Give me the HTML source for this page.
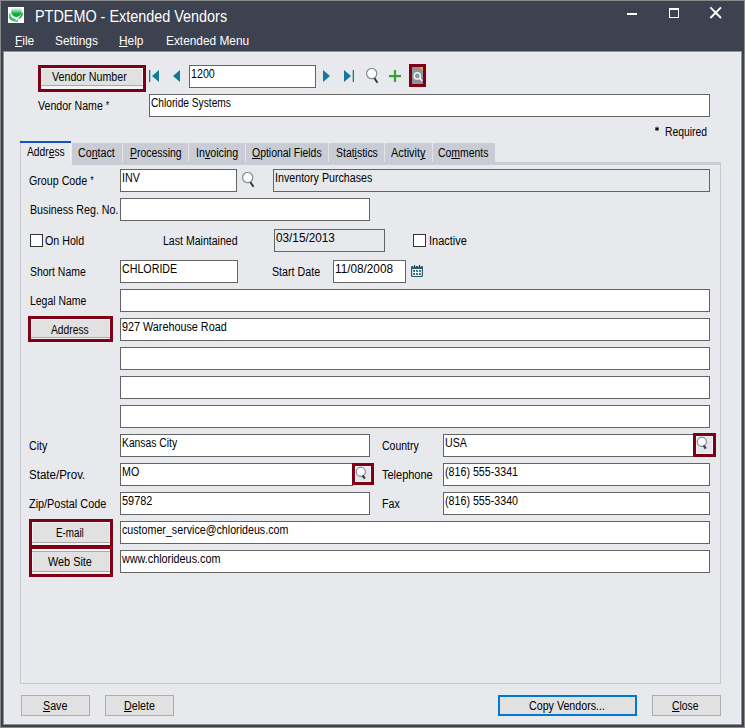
<!DOCTYPE html><html><head><meta charset="utf-8"><title>PTDEMO - Extended Vendors</title><style>
*{margin:0;padding:0}
html,body{width:745px;height:728px;overflow:hidden;background:#8a8a8a}
.t{position:absolute;white-space:pre;font-family:"Liberation Sans",sans-serif;transform-origin:0 0}
.b{position:absolute}

.ast{font-size:10px;position:relative;top:-1px}
u{text-decoration:underline;text-decoration-thickness:1px;text-underline-offset:1px}
svg{position:absolute}
</style></head><body>
<div class="b" style="left:1px;top:1px;width:743px;height:726px;background:#3c4250"></div>
<div class="b" style="left:3px;top:51px;width:739px;height:674px;box-sizing:border-box;background:#e8e9ec;border:1px solid #8c8e94"></div>
<div class="b" style="left:4px;top:52px;width:737px;height:672px;box-sizing:border-box;border:1px solid #eff0f3"></div>
<div class="b" style="left:8px;top:7px;width:16px;height:16px;background:#fff"></div>
<svg style="left:8px;top:7px" width="16" height="16" viewBox="0 0 16 16"><defs><linearGradient id="g" x1="0" y1="0" x2="0" y2="1"><stop offset="0" stop-color="#f0faf2"/><stop offset="0.25" stop-color="#9edcb0"/><stop offset="0.6" stop-color="#16b04a"/><stop offset="1" stop-color="#0a9c3c"/></linearGradient></defs><path d="M3.2 2.6 Q3.2 1 5 1 L11.8 1 Q13.6 1 13.6 2.6 L13.6 5 Q13.2 9.2 8.3 10 Q3.4 9.2 3.2 5 Z" fill="url(#g)"/><path d="M15 5.2 Q15.5 11 8.5 12.8 Q12.6 10 13.4 6.2 Z" fill="#12a844"/><path d="M1.6 6.2 Q1.4 11.6 7.5 12.6" stroke="#22b050" stroke-width="1.1" fill="none"/><path d="M1.2 9.6 Q3 14.6 10 14" stroke="#22b050" stroke-width="1.3" fill="none"/></svg>
<div class="t" style="left:35px;top:9px;font-size:16px;line-height:16px;color:#fff;transform:scaleX(0.9);">PTDEMO - Extended Vendors</div>
<div class="b" style="left:627px;top:13px;width:10px;height:2px;background:#fff"></div>
<div class="b" style="left:669px;top:8px;width:10px;height:10px;box-sizing:border-box;border:1px solid #fff;border-top-width:2px"></div>
<svg style="left:709px;top:6px" width="14" height="14" viewBox="0 0 14 14"><path d="M1.4 1.4 L12 12 M12 1.4 L1.4 12" stroke="#fff" stroke-width="1.9"/></svg>
<div class="t" style="left:15px;top:35px;font-size:12.5px;line-height:12.5px;color:#fff;transform:scaleX(0.95);"><u>F</u>ile</div>
<div class="t" style="left:55px;top:35px;font-size:12.5px;line-height:12.5px;color:#fff;transform:scaleX(0.95);">Settings</div>
<div class="t" style="left:119px;top:35px;font-size:12.5px;line-height:12.5px;color:#fff;transform:scaleX(0.95);"><u>H</u>elp</div>
<div class="t" style="left:166px;top:35px;font-size:12.5px;line-height:12.5px;color:#fff;transform:scaleX(0.95);">Extended Menu</div>
<div class="b" style="left:41px;top:68px;width:102px;height:21px;background:#f3f4f6"></div>
<div class="b" style="left:42px;top:69px;width:100px;height:16px;background:#e1e1e1"></div>
<div class="b" style="left:41px;top:85px;width:102px;height:1px;background:#a9a9a9"></div>
<div class="b" style="left:38px;top:65px;width:108px;height:27px;box-sizing:border-box;border:3px solid #7f0015"></div>
<div class="t" style="left:52px;top:71px;font-size:12px;line-height:12px;color:#000;transform:scaleX(0.89);">Vendor Number</div>
<svg style="left:148px;top:69px" width="12" height="14" viewBox="0 0 12 14"><rect x="1" y="1" width="1.3" height="12" fill="#137a9a"/><path d="M11 1 L4 7 L11 13 Z" fill="#137a9a"/></svg>
<svg style="left:172px;top:69px" width="10" height="14" viewBox="0 0 10 14"><path d="M8 1 L1 7 L8 13 Z" fill="#137a9a"/></svg>
<div class="b" style="left:189px;top:65px;width:127px;height:23px;box-sizing:border-box;border:1px solid #646464;background:#fff"></div>
<div class="t" style="left:191px;top:68px;font-size:12px;line-height:12px;color:#000;transform:scaleX(0.89);">1200</div>
<svg style="left:322px;top:69px" width="10" height="14" viewBox="0 0 10 14"><path d="M1 1 L8 7 L1 13 Z" fill="#137a9a"/></svg>
<svg style="left:343px;top:69px" width="12" height="14" viewBox="0 0 12 14"><path d="M1 1 L8 7 L1 13 Z" fill="#137a9a"/><rect x="9.7" y="1" width="1.3" height="12" fill="#137a9a"/></svg>
<svg style="left:365px;top:68px" width="16" height="17" viewBox="0 0 16 17"><circle cx="6.7" cy="5.6" r="5.1" fill="#fff" stroke="#868b95" stroke-width="1.2"/><path d="M9.4 10.3 L12.5 14.8" stroke="#2e3440" stroke-width="2"/></svg>
<svg style="left:388px;top:69px" width="14" height="14" viewBox="0 0 14 14"><rect x="1" y="6" width="12" height="2.2" fill="#32a332"/><rect x="5.9" y="1" width="2.2" height="12" fill="#32a332"/></svg>
<div class="b" style="left:409px;top:64px;width:17px;height:23px;background:#f4f6f8"></div>
<div class="b" style="left:409px;top:64px;width:17px;height:23px;box-sizing:border-box;border:3px solid #7f0015"></div>
<svg style="left:412px;top:67px" width="11" height="17" viewBox="0 0 11 17"><rect x="0" y="0" width="11" height="17" fill="#8d929b"/><path d="M7.2 0 L11 0 L11 3.8 Z" fill="#f5b000"/><circle cx="5.3" cy="8.9" r="3.1" fill="#8d929b" stroke="#f4f4f4" stroke-width="1.5"/><path d="M7.6 11.2 L10.2 14" stroke="#f4f4f4" stroke-width="1.6"/></svg>
<div class="t" style="left:38px;top:100px;font-size:12px;line-height:12px;color:#000;transform:scaleX(0.883);">Vendor Name <span class="ast">*</span></div>
<div class="b" style="left:149px;top:94px;width:561px;height:23px;box-sizing:border-box;border:1px solid #646464;background:#fff"></div>
<div class="t" style="left:151px;top:97px;font-size:12px;line-height:12px;color:#000;transform:scaleX(0.85);">Chloride Systems</div>
<svg style="left:654px;top:126px" width="6" height="6" viewBox="0 0 6 6"><path d="M3 0.6 L3 5 M1 1.8 L5 4 M5 1.8 L1 4" stroke="#000" stroke-width="1"/></svg>
<div class="t" style="left:665px;top:126px;font-size:12px;line-height:12px;color:#000;transform:scaleX(0.865);">Required</div>
<div class="b" style="left:20px;top:162px;width:701px;height:522px;box-sizing:border-box;border:1px solid #c5c8d2;border-top:3px solid #c9ccd5"></div>
<div class="b" style="left:72px;top:143px;width:423px;height:22px;background:#c9ccd5"></div>
<div class="b" style="left:122px;top:143px;width:1px;height:19px;background:#e2e4e8"></div>
<div class="b" style="left:188px;top:143px;width:1px;height:19px;background:#e2e4e8"></div>
<div class="b" style="left:245px;top:143px;width:1px;height:19px;background:#e2e4e8"></div>
<div class="b" style="left:328px;top:143px;width:1px;height:19px;background:#e2e4e8"></div>
<div class="b" style="left:384px;top:143px;width:1px;height:19px;background:#e2e4e8"></div>
<div class="b" style="left:432px;top:143px;width:1px;height:19px;background:#e2e4e8"></div>
<div class="b" style="left:20px;top:140px;width:52px;height:25px;background:#e8e9ec;border-left:1px solid #c5c8d2;box-sizing:border-box"></div>
<div class="b" style="left:20px;top:141px;width:51px;height:2px;background:#1450c8"></div>
<div class="b" style="left:70px;top:143px;width:1px;height:19px;background:#f4f5f7"></div>
<div class="t" style="left:27px;top:146px;font-size:12px;line-height:12px;color:#000;transform:scaleX(0.855);">Addr<u>e</u>ss</div>
<div class="t" style="left:78px;top:147px;font-size:12px;line-height:12px;color:#000;transform:scaleX(0.89);">Co<u>n</u>tact</div>
<div class="t" style="left:130px;top:147px;font-size:12px;line-height:12px;color:#000;transform:scaleX(0.87);"><u>P</u>rocessing</div>
<div class="t" style="left:196px;top:147px;font-size:12px;line-height:12px;color:#000;transform:scaleX(0.89);">In<u>v</u>oicing</div>
<div class="t" style="left:252px;top:147px;font-size:12px;line-height:12px;color:#000;transform:scaleX(0.87);"><u>O</u>ptional Fields</div>
<div class="t" style="left:336px;top:147px;font-size:12px;line-height:12px;color:#000;transform:scaleX(0.871);">Stat<u>i</u>stics</div>
<div class="t" style="left:391px;top:147px;font-size:12px;line-height:12px;color:#000;transform:scaleX(0.905);">Activit<u>y</u></div>
<div class="t" style="left:438px;top:147px;font-size:12px;line-height:12px;color:#000;transform:scaleX(0.87);">Co<u>m</u>ments</div>
<div class="t" style="left:29px;top:175px;font-size:12px;line-height:12px;color:#000;transform:scaleX(0.89);">Group Code <span class="ast">*</span></div>
<div class="b" style="left:120px;top:169px;width:117px;height:23px;box-sizing:border-box;border:1px solid #646464;background:#fff"></div>
<div class="t" style="left:122px;top:172px;font-size:12px;line-height:12px;color:#000;transform:scaleX(0.89);">INV</div>
<svg style="left:241px;top:172px" width="16" height="17" viewBox="0 0 16 17"><circle cx="6.7" cy="5.6" r="5.1" fill="#fff" stroke="#868b95" stroke-width="1.2"/><path d="M9.4 10.3 L12.5 14.8" stroke="#2e3440" stroke-width="2"/></svg>
<div class="b" style="left:273px;top:169px;width:437px;height:23px;box-sizing:border-box;border:1px solid #646464;background:#e8e9ec"></div>
<div class="t" style="left:275px;top:172px;font-size:12px;line-height:12px;color:#000;transform:scaleX(0.89);">Inventory Purchases</div>
<div class="t" style="left:30px;top:204px;font-size:12px;line-height:12px;color:#000;transform:scaleX(0.89);">Business Reg. No.</div>
<div class="b" style="left:120px;top:198px;width:250px;height:23px;box-sizing:border-box;border:1px solid #646464;background:#fff"></div>
<div class="b" style="left:30px;top:234px;width:13px;height:13px;box-sizing:border-box;border:1px solid #333;background:#fff"></div>
<div class="t" style="left:45px;top:235px;font-size:12px;line-height:12px;color:#000;transform:scaleX(0.89);">On Hold</div>
<div class="t" style="left:163px;top:235px;font-size:12px;line-height:12px;color:#000;transform:scaleX(0.88);">Last Maintained</div>
<div class="b" style="left:274px;top:229px;width:111px;height:23px;box-sizing:border-box;border:1px solid #646464;background:#e8e9ec"></div>
<div class="t" style="left:276px;top:232px;font-size:12px;line-height:12px;color:#000;transform:scaleX(0.981);">03/15/2013</div>
<div class="b" style="left:413px;top:234px;width:13px;height:13px;box-sizing:border-box;border:1px solid #333;background:#fff"></div>
<div class="t" style="left:429px;top:235px;font-size:12px;line-height:12px;color:#000;transform:scaleX(0.915);">Inactive</div>
<div class="t" style="left:30px;top:266px;font-size:12px;line-height:12px;color:#000;transform:scaleX(0.87);">Short Name</div>
<div class="b" style="left:120px;top:260px;width:118px;height:23px;box-sizing:border-box;border:1px solid #646464;background:#fff"></div>
<div class="t" style="left:122px;top:263px;font-size:12px;line-height:12px;color:#000;transform:scaleX(0.89);">CHLORIDE</div>
<div class="t" style="left:272px;top:266px;font-size:12px;line-height:12px;color:#000;transform:scaleX(0.89);">Start Date</div>
<div class="b" style="left:333px;top:260px;width:73px;height:23px;box-sizing:border-box;border:1px solid #646464;background:#fff"></div>
<div class="t" style="left:335px;top:263px;font-size:12px;line-height:12px;color:#000;transform:scaleX(0.98);">11/08/2008</div>
<svg style="left:411px;top:264px" width="13" height="14" viewBox="0 0 13 14"><rect x="0" y="2" width="12" height="11" rx="1.3" fill="#1f5d6d"/><rect x="2.3" y="1.6" width="2.4" height="1.5" fill="#e8e9ec"/><rect x="7.3" y="1.6" width="2.4" height="1.5" fill="#e8e9ec"/><rect x="3" y="1" width="1" height="2.2" fill="#1c2a3e"/><rect x="8" y="1" width="1" height="2.2" fill="#1c2a3e"/><rect x="1.2" y="5" width="9.6" height="6.9" fill="#fff"/><g fill="#1f5d6d"><rect x="2.1" y="6" width="1.9" height="1.8"/><rect x="5.1" y="6" width="1.9" height="1.8"/><rect x="8" y="6" width="1.9" height="1.8"/><rect x="2.1" y="9.1" width="1.9" height="1.8"/><rect x="5.1" y="9.1" width="1.9" height="1.8"/><rect x="8" y="9.1" width="1.9" height="1.8"/></g></svg>
<div class="t" style="left:30px;top:295px;font-size:12px;line-height:12px;color:#000;transform:scaleX(0.87);">Legal Name</div>
<div class="b" style="left:120px;top:289px;width:590px;height:23px;box-sizing:border-box;border:1px solid #646464;background:#fff"></div>
<div class="b" style="left:31px;top:319px;width:79px;height:20px;background:#f3f4f6"></div>
<div class="b" style="left:32px;top:320px;width:77px;height:17px;background:#e1e1e1"></div>
<div class="b" style="left:31px;top:337px;width:79px;height:1px;background:#a9a9a9"></div>
<div class="b" style="left:28px;top:316px;width:85px;height:26px;box-sizing:border-box;border:3px solid #7f0015"></div>
<div class="t" style="left:51px;top:324px;font-size:12px;line-height:12px;color:#000;transform:scaleX(0.855);">Address</div>
<div class="b" style="left:120px;top:318px;width:590px;height:23px;box-sizing:border-box;border:1px solid #646464;background:#fff"></div>
<div class="t" style="left:122px;top:321px;font-size:12px;line-height:12px;color:#000;transform:scaleX(0.9);">927 Warehouse Road</div>
<div class="b" style="left:120px;top:347px;width:590px;height:23px;box-sizing:border-box;border:1px solid #646464;background:#fff"></div>
<div class="b" style="left:120px;top:376px;width:590px;height:23px;box-sizing:border-box;border:1px solid #646464;background:#fff"></div>
<div class="b" style="left:120px;top:405px;width:590px;height:23px;box-sizing:border-box;border:1px solid #646464;background:#fff"></div>
<div class="t" style="left:29px;top:440px;font-size:12px;line-height:12px;color:#000;transform:scaleX(0.89);">City</div>
<div class="b" style="left:120px;top:434px;width:250px;height:23px;box-sizing:border-box;border:1px solid #646464;background:#fff"></div>
<div class="t" style="left:122px;top:437px;font-size:12px;line-height:12px;color:#000;transform:scaleX(0.86);">Kansas City</div>
<div class="t" style="left:382px;top:440px;font-size:12px;line-height:12px;color:#000;transform:scaleX(0.873);">Country</div>
<div class="b" style="left:443px;top:434px;width:251px;height:23px;box-sizing:border-box;border:1px solid #646464;background:#fff"></div>
<div class="t" style="left:445px;top:437px;font-size:12px;line-height:12px;color:#000;transform:scaleX(0.89);">USA</div>
<div class="b" style="left:693px;top:433px;width:23px;height:24px;background:#e4e6ea"></div>
<div class="b" style="left:696px;top:436px;width:17px;height:18px;box-sizing:border-box;border:1px solid #f2f6fa"></div>
<div class="b" style="left:693px;top:433px;width:23px;height:24px;box-sizing:border-box;border:3px solid #7f0015"></div>
<svg style="left:696px;top:436px" width="16" height="16" viewBox="0 0 16 16"><circle cx="5.8" cy="5.8" r="4.6" fill="#fff" stroke="#6e747e" stroke-width="1"/><path d="M7.6 9.3 L9.8 12.6" stroke="#3a3f48" stroke-width="2.2"/></svg>
<div class="t" style="left:29px;top:469px;font-size:12px;line-height:12px;color:#000;transform:scaleX(0.962);">State/Prov.</div>
<div class="b" style="left:120px;top:463px;width:233px;height:23px;box-sizing:border-box;border:1px solid #646464;background:#fff"></div>
<div class="t" style="left:122px;top:466px;font-size:12px;line-height:12px;color:#000;transform:scaleX(0.89);">MO</div>
<div class="b" style="left:352px;top:463px;width:22px;height:22px;background:#e4e6ea"></div>
<div class="b" style="left:355px;top:466px;width:16px;height:16px;box-sizing:border-box;border:1px solid #f2f6fa"></div>
<div class="b" style="left:352px;top:463px;width:22px;height:22px;box-sizing:border-box;border:3px solid #7f0015"></div>
<svg style="left:355px;top:466px" width="16" height="16" viewBox="0 0 16 16"><circle cx="5.8" cy="5.8" r="4.6" fill="#fff" stroke="#6e747e" stroke-width="1"/><path d="M7.6 9.3 L9.8 12.6" stroke="#3a3f48" stroke-width="2.2"/></svg>
<div class="t" style="left:382px;top:469px;font-size:12px;line-height:12px;color:#000;transform:scaleX(0.915);">Telephone</div>
<div class="b" style="left:443px;top:463px;width:267px;height:23px;box-sizing:border-box;border:1px solid #646464;background:#fff"></div>
<div class="t" style="left:445px;top:466px;font-size:12px;line-height:12px;color:#000;transform:scaleX(0.89);">(816) 555-3341</div>
<div class="t" style="left:29px;top:498px;font-size:12px;line-height:12px;color:#000;transform:scaleX(0.905);">Zip/Postal Code</div>
<div class="b" style="left:120px;top:492px;width:250px;height:23px;box-sizing:border-box;border:1px solid #646464;background:#fff"></div>
<div class="t" style="left:122px;top:495px;font-size:12px;line-height:12px;color:#000;transform:scaleX(0.91);">59782</div>
<div class="t" style="left:382px;top:498px;font-size:12px;line-height:12px;color:#000;transform:scaleX(0.89);">Fax</div>
<div class="b" style="left:443px;top:492px;width:267px;height:23px;box-sizing:border-box;border:1px solid #646464;background:#fff"></div>
<div class="t" style="left:445px;top:495px;font-size:12px;line-height:12px;color:#000;transform:scaleX(0.89);">(816) 555-3340</div>
<div class="b" style="left:32px;top:522px;width:78px;height:52px;background:#f3f4f6"></div>
<div class="b" style="left:33px;top:523px;width:76px;height:19px;background:#e1e1e1"></div>
<div class="b" style="left:32px;top:542px;width:78px;height:1px;background:#a9a9a9"></div>
<div class="b" style="left:32px;top:551px;width:78px;height:1px;background:#a9a9a9"></div>
<div class="b" style="left:33px;top:552px;width:76px;height:19px;background:#e1e1e1"></div>
<div class="b" style="left:32px;top:571px;width:78px;height:1px;background:#a9a9a9"></div>
<div class="b" style="left:29px;top:519px;width:84px;height:30px;box-sizing:border-box;border:3px solid #7f0015"></div>
<div class="b" style="left:29px;top:545px;width:84px;height:32px;box-sizing:border-box;border:3px solid #7f0015"></div>
<div class="t" style="left:56px;top:527px;font-size:12px;line-height:12px;color:#000;transform:scaleX(0.817);">E-mail</div>
<div class="t" style="left:48px;top:556px;font-size:12px;line-height:12px;color:#000;transform:scaleX(0.905);">Web Site</div>
<div class="b" style="left:120px;top:521px;width:590px;height:23px;box-sizing:border-box;border:1px solid #646464;background:#fff"></div>
<div class="t" style="left:122px;top:524px;font-size:12px;line-height:12px;color:#000;transform:scaleX(0.89);">customer_service@chlorideus.com</div>
<div class="b" style="left:120px;top:550px;width:590px;height:23px;box-sizing:border-box;border:1px solid #646464;background:#fff"></div>
<div class="t" style="left:122px;top:553px;font-size:12px;line-height:12px;color:#000;transform:scaleX(0.9);">www.chlorideus.com</div>
<div class="b" style="left:21px;top:695px;width:69px;height:21px;box-sizing:border-box;border:1px solid #adadad;background:#e1e1e1"></div>
<div class="t" style="left:43px;top:700px;font-size:12px;line-height:12px;color:#000;transform:scaleX(0.89);"><u>S</u>ave</div>
<div class="b" style="left:105px;top:695px;width:69px;height:21px;box-sizing:border-box;border:1px solid #adadad;background:#e1e1e1"></div>
<div class="t" style="left:124px;top:700px;font-size:12px;line-height:12px;color:#000;transform:scaleX(0.89);"><u>D</u>elete</div>
<div class="b" style="left:498px;top:695px;width:139px;height:21px;box-sizing:border-box;border:2px solid #0078d7;background:#e1e1e1"></div>
<div class="t" style="left:529px;top:700px;font-size:12px;line-height:12px;color:#000;transform:scaleX(0.89);">Copy Vendors...</div>
<div class="b" style="left:652px;top:695px;width:69px;height:21px;box-sizing:border-box;border:1px solid #adadad;background:#e1e1e1"></div>
<div class="t" style="left:672px;top:700px;font-size:12px;line-height:12px;color:#000;transform:scaleX(0.86);"><u>C</u>lose</div>
</body></html>
